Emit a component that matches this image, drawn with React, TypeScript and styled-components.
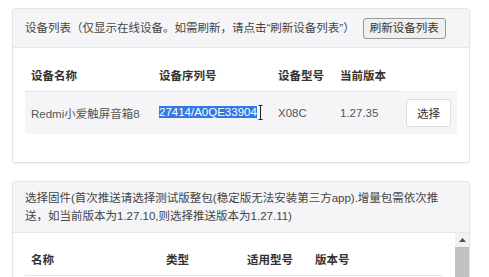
import React from 'react';
import styled, { createGlobalStyle } from 'styled-components';

const GlobalStyle = createGlobalStyle`
  html, body {
    margin: 0;
    background: #fff;
  }
  body {
    font-family: "Liberation Sans", "Noto Sans CJK SC", sans-serif;
    font-size: 11.5px;
    color: #333;
  }
`;

const Page = styled.div`
  display: flex;
  flex-direction: column;
  gap: 18px;
  padding: 8px 19px 0 12px;
`;

const Card = styled.section`
  background: #fff;
  border: 1px solid #e4e4e6;
  border-radius: 3px;
  box-shadow: 0 1px 2px rgba(0, 0, 0, 0.05);
  overflow: hidden;
`;

const CardHeader = styled.div`
  display: flex;
  align-items: center;
  gap: 8px;
  min-height: 39px;
  box-sizing: border-box;
  padding: 7px 12px;
  line-height: 18px;
  background: #f5f5f7;
  border-bottom: 1px solid #e6e6e8;
  color: #444;
`;

const RefreshButton = styled.button`
  height: 21px;
  padding: 0 6px;
  font: inherit;
  font-size: 11.5px;
  color: #333;
  background: #efefef;
  border: 1px solid #999;
  border-radius: 3px;
`;

const CardBody = styled.div<{ $bottom?: number }>`
  padding: 11px 12px ${(p) => p.$bottom ?? 11}px;
`;

const Table = styled.table`
  width: 100%;
  border-collapse: collapse;
  table-layout: fixed;
`;

const Th = styled.th<{ $w?: number; $plain?: boolean }>`
  box-sizing: border-box;
  width: ${(p) => (p.$w ? `${p.$w}px` : 'auto')};
  height: 32px;
  padding: 0 6px;
  text-align: left;
  font-weight: bold;
  color: #333;
  border-bottom: 1px solid ${(p) => (p.$plain ? 'transparent' : '#e2e2e4')};
`;

const Td = styled.td`
  height: 42px;
  padding: 0 6px;
  background: #f5f5f7;
  color: #555;
  white-space: nowrap;
`;

const Selected = styled.span`
  background: #3479e0;
  color: #fff;
`;

const Caret = styled.svg`
  vertical-align: middle;
  margin-left: 1px;
`;

const SelectButton = styled.button`
  width: 45px;
  height: 28px;
  padding: 0;
  font: inherit;
  color: #333;
  background: #fff;
  border: 1px solid #dcdcdf;
  border-radius: 3px;
`;

const ScrollBody = styled.div`
  display: flex;
  height: 200px;
`;

const ScrollContent = styled.div`
  flex: 1;
  padding: 11px 13px 11px 12px;
`;

const ScrollBar = styled.div`
  width: 14px;
  display: flex;
  flex-direction: column;
  background: #f1f1f1;
`;

const ScrollArrow = styled.div`
  height: 14px;
  display: flex;
  align-items: center;
  justify-content: center;
`;

const ScrollThumb = styled.div`
  flex: 1;
  background: #c1c1c1;
`;

const devices = [
  { name: 'Redmi小爱触屏音箱8', serial: '27414/A0QE33904', model: 'X08C', version: '1.27.35' },
];

export default function App() {
  return (
    <>
      <GlobalStyle />
      <Page>
        <Card>
          <CardHeader>
            <span>设备列表（仅显示在线设备。如需刷新，请点击“刷新设备列表”）</span>
            <RefreshButton>刷新设备列表</RefreshButton>
          </CardHeader>
          <CardBody $bottom={28}>
            <Table>
              <thead>
                <tr>
                  <Th $w={128}>设备名称</Th>
                  <Th $w={119}>设备序列号</Th>
                  <Th $w={62}>设备型号</Th>
                  <Th $w={66}>当前版本</Th>
                  <Th $plain />
                </tr>
              </thead>
              <tbody>
                {devices.map((d) => (
                  <tr key={d.serial}>
                    <Td>{d.name}</Td>
                    <Td>
                      <Selected>{d.serial}</Selected>
                      <Caret width="5" height="15" viewBox="0 0 5 15">
                        <path d="M0.5 0.5h4M2.5 0.5v14M0.5 14.5h4" stroke="#222" strokeWidth="1" fill="none" />
                      </Caret>
                    </Td>
                    <Td>{d.model}</Td>
                    <Td>{d.version}</Td>
                    <Td>
                      <SelectButton>选择</SelectButton>
                    </Td>
                  </tr>
                ))}
              </tbody>
            </Table>
          </CardBody>
        </Card>

        <Card>
          <CardHeader>
            <span>
              选择固件(首次推送请选择测试版整包(稳定版无法安装第三方app).增量包需依次推
              <br />
              送，如当前版本为1.27.10,则选择推送版本为1.27.11)
            </span>
          </CardHeader>
          <ScrollBody>
            <ScrollContent>
              <Table>
                <thead>
                  <tr>
                    <Th $w={135}>名称</Th>
                    <Th $w={81}>类型</Th>
                    <Th $w={68}>适用型号</Th>
                    <Th>版本号</Th>
                  </tr>
                </thead>
              </Table>
            </ScrollContent>
            <ScrollBar>
              <ScrollArrow>
                <svg width="7" height="4" viewBox="0 0 7 4">
                  <path d="M0 4 L3.5 0 L7 4 Z" fill="#505050" />
                </svg>
              </ScrollArrow>
              <ScrollThumb />
            </ScrollBar>
          </ScrollBody>
        </Card>
      </Page>
    </>
  );
}
